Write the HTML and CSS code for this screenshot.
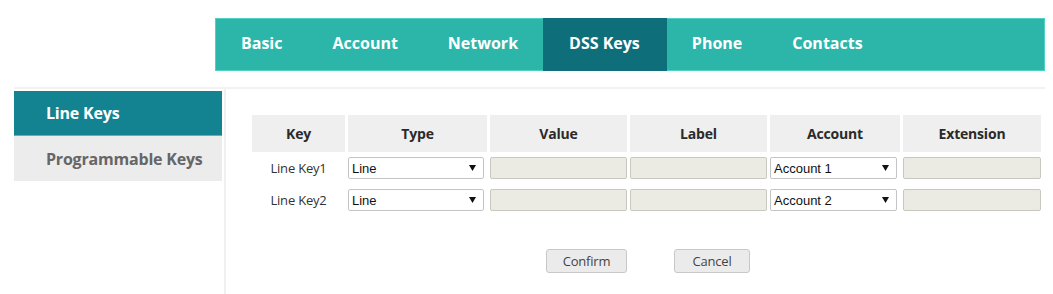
FILE: index.html
```html
<!DOCTYPE html>
<html>
<head>
<meta charset="utf-8">
<link rel="stylesheet" href="styles.css">
</head>
<body>
<nav class="topnav">
  <a class="tab">Basic</a>
  <a class="tab">Account</a>
  <a class="tab">Network</a>
  <a class="tab active">DSS Keys</a>
  <a class="tab">Phone</a>
  <a class="tab">Contacts</a>
</nav>
<div class="main">
  <aside class="sidebar">
    <div class="side-item active">Line Keys</div>
    <div class="side-item">Programmable Keys</div>
  </aside>
  <section class="content">
    <table class="keys">
      <thead>
        <tr>
          <th class="c-key">Key</th>
          <th class="c-type">Type</th>
          <th class="c-value">Value</th>
          <th class="c-label">Label</th>
          <th class="c-account">Account</th>
          <th class="c-ext">Extension</th>
        </tr>
      </thead>
      <tbody>
        <tr>
          <td class="keyname">Line Key1</td>
          <td><select class="sel sel-type"><option>Line</option></select></td>
          <td><input class="dis" disabled></td>
          <td><input class="dis" disabled></td>
          <td><select class="sel sel-acc"><option>Account 1</option></select></td>
          <td><input class="dis" disabled></td>
        </tr>
        <tr>
          <td class="keyname">Line Key2</td>
          <td><select class="sel sel-type"><option>Line</option></select></td>
          <td><input class="dis" disabled></td>
          <td><input class="dis" disabled></td>
          <td><select class="sel sel-acc"><option>Account 2</option></select></td>
          <td><input class="dis" disabled></td>
        </tr>
      </tbody>
    </table>
    <div class="actions">
      <button class="btn btn-confirm">Confirm</button>
      <button class="btn btn-cancel">Cancel</button>
    </div>
  </section>
</div>
</body>
</html>
```
FILE: styles.css
```css
html, body {
  margin: 0;
  padding: 0;
  background: #fff;
  font-family: "Open Sans", "DejaVu Sans", sans-serif;
}

.topnav {
  display: flex;
  margin: 18px 0 0 215px;
  width: 830px;
  height: 53px;
  box-sizing: border-box;
  background: #2cb6aa;
  border: 1px solid #52cfc3;
}

.tab {
  display: flex;
  align-items: center;
  padding: 0 25px 3px 25px;
  color: #fff;
  font-weight: 700;
  font-size: 16px;
  letter-spacing: 0;
}

.tab.active {
  background: #0e6f7b;
  margin: -1px 0;
  padding: 0 27px 3px 26px;
}

.main {
  display: flex;
  margin: 16px 8px 0 14px;
  border-top: 2px solid #f2f2f2;
  height: 206px;
}

.sidebar {
  flex: 0 0 208px;
  padding-top: 2px;
}

.side-item {
  height: 45px;
  display: flex;
  align-items: center;
  padding-left: 32px;
  font-size: 16px;
  font-weight: 700;
  letter-spacing: -0.2px;
  background: #ececec;
  color: #666;
}

.side-item.active {
  height: 44px;
  background: #138391;
  color: #fff;
  border-bottom: 1px solid #5fb0b9;
}

.content {
  flex: 1;
  min-width: 0;
  margin-left: 2px;
  border-left: 2px solid #f0f0f0;
  padding: 26px 0 0 23px;
}

.keys {
  border-collapse: separate;
  border-spacing: 3px 0;
  table-layout: fixed;
  width: 794px;
}

.keys th {
  background: #efefef;
  height: 37px;
  font-size: 14px;
  font-weight: 700;
  color: #2a2a2a;
  letter-spacing: -0.2px;
  padding: 0;
}

.c-key { width: 93px; }
.c-type { width: 139px; }
.c-value { width: 137px; }
.c-label { width: 137px; }
.c-account { width: 130px; }
.c-ext { width: 138px; }

.keys td {
  height: 32px;
  padding: 0;
  vertical-align: middle;
}

.keyname {
  text-align: center;
  font-size: 13px;
  color: #333;
  letter-spacing: -0.2px;
}

.dis {
  display: block;
  box-sizing: border-box;
  width: 100%;
  height: 22px;
  margin: 0;
  border: 1px solid #c8c8c0;
  border-radius: 2px;
  background: #ebebe4;
}

.sel {
  display: block;
  box-sizing: border-box;
  height: 22px;
  margin: 0;
  padding: 0 0 0 3px;
  border: 1px solid #c4c4c4;
  border-radius: 2px;
  background-color: #fff;
  background-image: url("data:image/svg+xml,%3Csvg xmlns='http://www.w3.org/2000/svg' width='7' height='6'%3E%3Cpath d='M0 0h7L3.5 6z' fill='%23111'/%3E%3C/svg%3E");
  background-repeat: no-repeat;
  background-position: right 7px center;
  -webkit-appearance: none;
  appearance: none;
  font-family: "Liberation Sans", Arial, sans-serif;
  font-size: 13px;
  color: #111;
}

.sel-type { width: 136px; }
.sel-acc { width: 127px; }

.actions {
  display: flex;
  justify-content: center;
  gap: 47px;
  margin-top: 33px;
  padding-left: 2px;
  box-sizing: border-box;
  width: 796px;
}

.btn {
  height: 24px;
  box-sizing: border-box;
  border: 1px solid #c8c8c8;
  border-radius: 3px;
  background: #ebebeb;
  font-family: "Open Sans", "DejaVu Sans", sans-serif;
  font-size: 13px;
  color: #444;
  letter-spacing: -0.2px;
  padding: 0;
}

.btn-confirm { width: 81px; }
.btn-cancel { width: 76px; }
```
